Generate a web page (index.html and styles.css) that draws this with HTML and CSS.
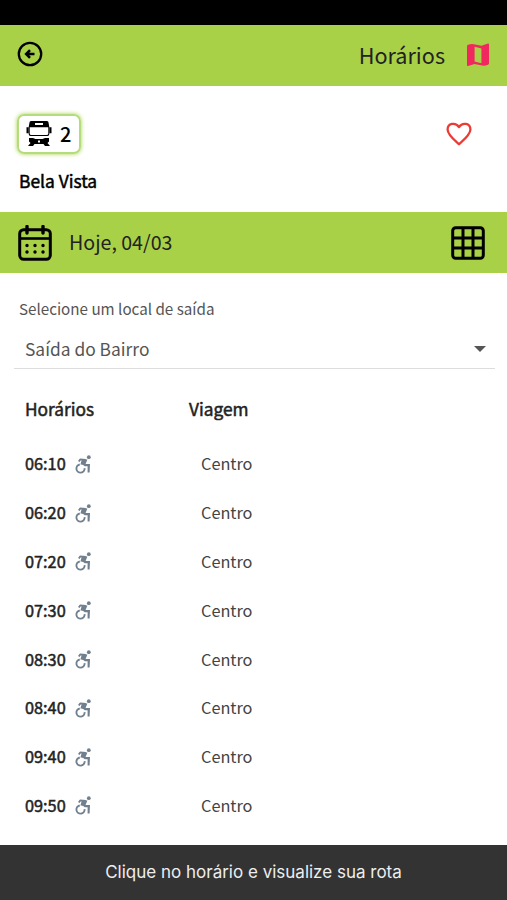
FILE: index.html
```html
<!DOCTYPE html>
<html lang="pt-BR">
<head>
    <meta charset="UTF-8">
    <meta name="viewport" content="width=device-width, initial-scale=1.0">
    <title>Horários</title>
    <link rel="stylesheet" href="styles.css">
</head>
<body>

    <!-- Icons used in the schedule rows -->
    <svg class="sprite" aria-hidden="true">
        <symbol id="wheelchair" viewBox="0 0 17 19">
            <circle cx="13.8" cy="2.2" r="1.9"/>
            <path d="M3.800 6.600 5.200 4.400 10.800 4.800" fill="none" stroke="currentColor" stroke-width="1.800" stroke-linejoin="round"/>
            <path d="M7 4 12.400 4.600 10.600 9H15L14.600 17.400H12.600V11.200H9.800Q8 9.200 5.400 9.600Z"/>
            <path d="M4.800 9.500A4.100 4.100 0 1 0 9.600 13.200" fill="none" stroke="currentColor" stroke-width="1.900"/>
        </symbol>
    </svg>

    <div class="status-bar"></div>

    <!-- Header -->
    <header class="top-bar">
        <svg class="back" viewBox="0 0 26 26">
            <circle cx="13" cy="13" r="11.2" fill="none" stroke="#000" stroke-width="2.3"/>
            <path d="M17.500 13H9.800M13 9.200 9.200 13 13 16.800" fill="none" stroke="#000" stroke-width="2.600"/>
        </svg>
        <h1>Horários</h1>
        <svg class="map" viewBox="0 0 24 24">
            <path fill="#f0285f" fill-rule="evenodd" d="M1 3.2Q1 2 2 1.8Q5 .6 8 1.2L15.5 2.8 22 .6Q23 .4 23 1.5V20.4Q23 21.4 22 21.8Q19 23 16 22.6L8.5 21 2 23Q1 23.2 1 22ZM8.6 3.8V18.4L15.4 20.2V5.6Z"/>
        </svg>
    </header>

    <!-- Bus line -->
    <section class="line">
        <div class="line-top">
            <div class="badge">
                <svg class="bus" viewBox="0 0 26 26">
                    <path fill-rule="evenodd" d="M3.500 1.500Q3.500 0 5 0H21Q22.500 0 22.500 1.500L23.300 6V13Q23.300 15 21.500 15H4.500Q2.700 15 2.700 13V6ZM9 2V4H17V2ZM3.700 6.300V12.500Q3.700 14 5.500 14H20.500Q22.300 14 22.300 12.500V6.300Z"/>
                    <path d="M1.600 6.200V12.200M24.400 6.200V12.200" stroke="#000" stroke-width="2.200"/>
                    <path fill-rule="evenodd" d="M3 17H7L9.500 18H16.500L19 17H23V20.500L21.500 22 24 25H19L17.500 23H8.500L7 25H2L4.500 22 3 20.500ZM12 19.500V21.500H14V19.500Z"/>
                </svg>
                <span>2</span>
            </div>
            <svg class="heart" viewBox="0 0 26 24">
                <path d="M13 22.200C8.500 18.200 1.600 13 1.600 7.600C1.600 1.400 9.400-.3 13 5C16.600-.3 24.400 1.400 24.400 7.600C24.400 13 17.500 18.200 13 22.200Z" fill="none" stroke="#ea3c35" stroke-width="2.300" stroke-linejoin="round"/>
            </svg>
        </div>
        <h2>Bela Vista</h2>
    </section>

    <!-- Selected date -->
    <div class="date-bar">
        <svg class="calendar" viewBox="0 0 34 36" fill="none" stroke="#000">
            <rect x="1.700" y="4.700" width="30.600" height="29.600" rx="4" stroke-width="3"/>
            <path d="M2 13.500H32" stroke-width="2.600"/>
            <path d="M9 1.500V8M25 1.500V8" stroke-width="3.400" stroke-linecap="round"/>
            <path d="M9 20.500H9.010M17 20.500H17.010M25 20.500H25.010M9 27H9.010M17 27H17.010M25 27H25.010" stroke-width="3.400" stroke-linecap="round"/>
        </svg>
        <span>Hoje, 04/03</span>
        <svg class="grid" viewBox="0 0 34 34" fill="none" stroke="#000" stroke-width="3">
            <rect x="1.700" y="1.700" width="30.600" height="30.600" rx="3"/>
            <path d="M12 2V32M22 2V32M2 12H32M2 22H32"/>
        </svg>
    </div>

    <!-- Departure place -->
    <div class="departure">
        <label>Selecione um local de saída</label>
        <div class="select">
            <span>Saída do Bairro</span>
            <i class="caret"></i>
        </div>
    </div>

    <!-- Schedule -->
    <div class="schedule">
        <div class="row head"><b>Horários</b><b>Viagem</b></div>
        <div class="row"><b>06:10</b><svg class="chair"><use href="#wheelchair"/></svg><span>Centro</span></div>
        <div class="row"><b>06:20</b><svg class="chair"><use href="#wheelchair"/></svg><span>Centro</span></div>
        <div class="row"><b>07:20</b><svg class="chair"><use href="#wheelchair"/></svg><span>Centro</span></div>
        <div class="row"><b>07:30</b><svg class="chair"><use href="#wheelchair"/></svg><span>Centro</span></div>
        <div class="row"><b>08:30</b><svg class="chair"><use href="#wheelchair"/></svg><span>Centro</span></div>
        <div class="row"><b>08:40</b><svg class="chair"><use href="#wheelchair"/></svg><span>Centro</span></div>
        <div class="row"><b>09:40</b><svg class="chair"><use href="#wheelchair"/></svg><span>Centro</span></div>
        <div class="row"><b>09:50</b><svg class="chair"><use href="#wheelchair"/></svg><span>Centro</span></div>
    </div>

    <footer>Clique no horário e visualize sua rota</footer>

</body>
</html>
```
FILE: styles.css
```css
* {
    box-sizing: border-box;
}

body {
    margin: 0;
    height: 900px;
    display: flex;
    flex-direction: column;
    overflow: hidden;
    background: #fff;
    color: #222;
    font-family: "Noto Sans CJK JP", "Noto Sans", sans-serif;
    line-height: 24px;
}

h1, h2 {
    margin: 0;
}

svg {
    display: block;
    flex: none;
}

.sprite {
    width: 0;
    height: 0;
    position: absolute;
}

.status-bar {
    height: 25px;
    flex: none;
    background: #000;
}

/* Header */
.top-bar {
    height: 61px;
    flex: none;
    display: flex;
    align-items: center;
    padding: 0 17px;
    background: #a9d148;
}

.back {
    width: 26px;
    height: 26px;
    margin-bottom: 3px;
}

.top-bar h1 {
    margin: 0 0 1px auto;
    font-size: 21.6px;
    font-weight: 400;
}

.map {
    width: 24px;
    height: 24px;
    margin: 0 0 2px 21px;
}

/* Bus line */
.line {
    height: 126px;
    flex: none;
    padding: 28px 35px 0 17px;
    color: #000;
}

.line-top {
    display: flex;
    align-items: center;
    justify-content: space-between;
}

.badge {
    width: 64px;
    height: 40px;
    display: flex;
    align-items: center;
    gap: 8px;
    padding-left: 7px;
    border: 2px solid #b5dc7c;
    border-radius: 7px;
    box-shadow: 0 0 4px #a9d148;
    font-size: 20px;
    font-weight: 500;
}

.bus {
    width: 26px;
    height: 26px;
}

.heart {
    width: 26px;
    height: 24px;
}

.line h2 {
    margin: 15px 0 0 2px;
    font-size: 17.4px;
    font-weight: 400;
    -webkit-text-stroke: 0.5px;
}

/* Selected date */
.date-bar {
    height: 61px;
    flex: none;
    display: flex;
    align-items: center;
    padding: 0 22px 0 18px;
    background: #a9d148;
    font-size: 19.6px;
}

.date-bar span {
    margin: 0 auto 1px 17px;
}

.calendar {
    width: 34px;
    height: 36px;
}

.grid {
    width: 34px;
    height: 34px;
}

/* Departure place */
.departure {
    padding: 23px 12px 0 14px;
    color: #555;
}

.departure label {
    display: block;
    margin-left: 5px;
    font-size: 15.2px;
}

.select {
    display: flex;
    align-items: center;
    justify-content: space-between;
    height: 49px;
    padding: 9px 9px 0 11px;
    border-bottom: 1px solid #ddd;
    font-size: 17.4px;
}

.caret {
    border: 6px solid transparent;
    border-top-color: #555;
    border-bottom: 0;
}

/* Schedule */
.schedule {
    padding: 13px 25px 0;
}

.row {
    display: flex;
    align-items: center;
    height: 48.8px;
    font-size: 16.3px;
}

.row b {
    width: 50px;
    font-weight: 400;
    -webkit-text-stroke: 0.5px;
}

.row span {
    margin-left: 109px;
    color: #444;
}

.head {
    height: 54px;
    margin-bottom: 3px;
    font-size: 17.3px;
}

.head b {
    width: 164px;
}

.chair {
    width: 17px;
    height: 19px;
    margin-top: 2px;
    color: #71808e;
    fill: currentColor;
}

/* Toast */
footer {
    height: 55px;
    flex: none;
    margin-top: auto;
    background: #333;
    color: #eee;
    font-family: Inter, sans-serif;
    font-size: 17px;
    line-height: 55px;
    text-align: center;
}
```
